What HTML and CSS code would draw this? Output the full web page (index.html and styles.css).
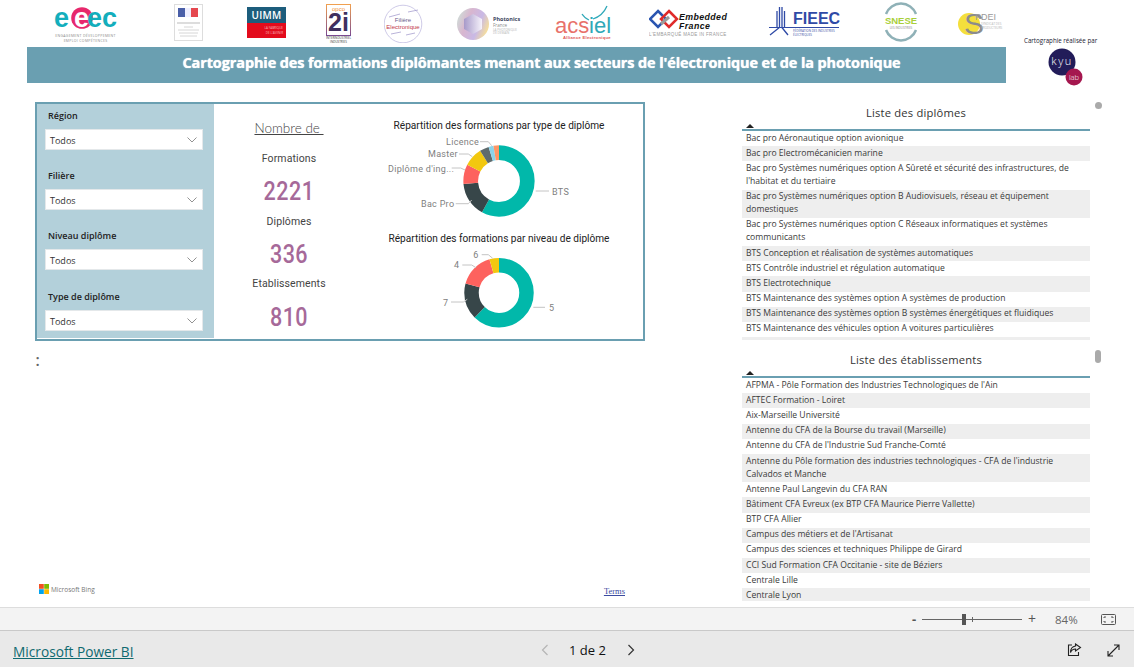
FILE: index.html
```html
<!DOCTYPE html>
<html lang="fr">
<head>
<meta charset="utf-8">
<title>Cartographie des formations</title>
<link rel="stylesheet" href="styles.css">
</head>
<body>
<main class="report">
  <header class="head">
    <div class="head-left">
      <div class="logos">
        <svg class="logo l-eeec" width="66" height="42" viewBox="0 0 66 42">
          <circle cx="28" cy="15" r="10.800" class="f-pink"/>
          <text x="0" y="24" class="t-eeec"><tspan class="f-teal">e</tspan><tspan dx="5" class="f-white">e</tspan><tspan dx="-2" class="f-teal">ec</tspan></text>
          <text x="31.500" y="34" class="t-tiny f-grey" text-anchor="middle">ENGAGEMENT DÉVELOPPEMENT</text>
          <text x="31.500" y="38.500" class="t-tiny f-grey" text-anchor="middle">EMPLOI COMPÉTENCES</text>
        </svg>
        <svg class="logo l-rf" width="30" height="38" viewBox="0 0 30 38">
          <rect x=".5" y=".5" width="28" height="36" class="box-grey"/>
          <rect x="4" y="4" width="7" height="9" fill="#4a5fa8"/>
          <rect x="11" y="4" width="6" height="9" fill="#eef"/>
          <rect x="17" y="4" width="7" height="9" fill="#e5484f"/>
          <path d="M3 19h23" class="line-grey"/>
          <path d="M10 23h9M4 26h21M5 29h19M6 32h17" class="line-light"/>
        </svg>
        <svg class="logo l-uimm" width="39" height="31" viewBox="0 0 39 31">
          <rect width="39" height="16" fill="#1d5d7c"/>
          <rect y="16" width="39" height="15" fill="#e30b1c"/>
          <text x="19.500" y="12" class="t-uimm f-white" text-anchor="middle">UIMM</text>
          <text x="36" y="21.500" class="t-mini f-pale" text-anchor="end">LA FABRIQUE</text>
          <text x="36" y="26.500" class="t-mini f-pale" text-anchor="end">DE L'AVENIR</text>
        </svg>
        <svg class="logo l-opco" width="26" height="42" viewBox="0 0 26 42">
          <defs>
            <linearGradient id="opco" x1="0" x2="0" y1="0" y2="1">
              <stop offset="0" stop-color="#f0a050"/>
              <stop offset="1" stop-color="#7a4a90"/>
            </linearGradient>
          </defs>
          <rect x=".5" y="1.500" width="24" height="31" fill="none" stroke="url(#opco)"/>
          <text class="t-opcoall"><tspan x="12.500" y="7.500" class="t-opco">opco</tspan><tspan x="12.500" y="28" class="t-2i">2i</tspan></text>
          <text x="12.500" y="36" class="t-mini f-dark" text-anchor="middle">INTERINDUSTRIEL</text>
          <text x="12.500" y="40" class="t-mini f-dark" text-anchor="middle">INDUSTRIES</text>
        </svg>
        <svg class="logo l-fil" width="40" height="42" viewBox="0 0 40 42">
          <circle cx="19" cy="23" r="18.800" class="ring-fil"/>
          <path d="M5 16l11-3M24 11l10-2M7 33l10-2M22 34l9-2" class="line-fil"/>
          <text x="19" y="21" class="t-fil f-plum" text-anchor="middle">Filière</text>
          <text x="19" y="28" class="t-fil f-red2" text-anchor="middle">Electronique</text>
        </svg>
        <svg class="logo l-pho" width="68" height="42" viewBox="0 0 68 42">
          <defs>
            <linearGradient id="pho" x1="0" x2="1" y1=".2" y2=".6">
              <stop offset="0" stop-color="#cfe0d8"/>
              <stop offset=".35" stop-color="#d8b6cf"/>
              <stop offset=".7" stop-color="#c9b9e6"/>
              <stop offset="1" stop-color="#f7df9a"/>
            </linearGradient>
            <linearGradient id="hex" x1="0" x2="1" y1="0" y2="0">
              <stop offset="0" stop-color="#a79ac9"/>
              <stop offset="1" stop-color="#f6f2fb"/>
            </linearGradient>
          </defs>
          <circle cx="16" cy="23" r="16" fill="url(#pho)"/>
          <path d="M16 13l9 5v10l-9 5-9-5V18z" fill="url(#hex)"/>
          <text x="36" y="20" class="t-pho">Photonics</text>
          <text x="36" y="25.500" class="t-mini2 f-grey">France</text>
          <text x="36" y="29.500" class="t-mini f-lgrey">LA PHOTONIQUE</text>
          <text x="36" y="33" class="t-mini f-lgrey">DE DEMAIN</text>
        </svg>
        <svg class="logo l-acs" width="60" height="42" viewBox="0 0 60 42">
          <path d="M54 3C51 10 46 14 40 16M29 11c2 3 4 5 7 6" class="line-acs"/>
          <text class="t-acsall"><tspan x="2" y="30" class="t-acs f-salmon">acs</tspan><tspan x="36" y="30" class="t-acs f-tealb">i</tspan><tspan x="41" y="30" class="t-acs f-tealb">el</tspan><tspan x="10" y="36" class="t-acs2 f-red3">Alliance Electronique</tspan></text>
        </svg>
        <svg class="logo l-emb" width="82" height="42" viewBox="0 0 82 42">
          <path d="M9 8l8 8-8 8-8-8z" class="emb-blue"/>
          <path d="M20 8l8 8-8 8-8-8z" class="emb-red"/>
          <path d="M12 21l8-7" class="emb-grey"/>
          <text x="30" y="16.500" class="t-emb">Embedded</text>
          <text x="30" y="25.500" class="t-emb">France</text>
          <text x="0" y="33" class="t-emb2">L'EMBARQUÉ MADE IN FRANCE</text>
        </svg>
        <svg class="logo l-fie" width="72" height="42" viewBox="0 0 72 42">
          <path d="M8 10v16M10.500 6v20M13 6v20M15.500 10v16M11 26L1 34M12.500 26L19 34" class="line-fie"/>
          <path d="M0 26.500h70" class="line-fie2"/>
          <text x="24" y="23" class="t-fie">FIEEC</text>
          <text x="24" y="31" class="t-mini f-blue">FÉDÉRATION DES INDUSTRIES</text>
          <text x="24" y="34.500" class="t-mini f-blue">ÉLECTRIQUES</text>
        </svg>
        <svg class="logo l-sne" width="38" height="42" viewBox="0 0 38 42">
          <path d="M4 13a16 16 0 0 1 30 0M4 29a16 16 0 0 0 30 0" class="ring-sne"/>
          <text x="19" y="22.500" class="t-sne" text-anchor="middle">SNESE</text>
          <text x="19" y="27.500" class="t-mini f-grey" text-anchor="middle">LES INDUSTRIES</text>
        </svg>
        <svg class="logo l-cpd" width="46" height="42" viewBox="0 0 46 42">
          <circle cx="11" cy="24" r="11" fill="#f4df3c"/>
          <text class="t-cpdall"><tspan x="6" y="34" class="t-cpd">S</tspan><tspan x="17" y="20" class="t-cpd2">PDEI</tspan></text>
          <text x="23" y="25" class="t-mini f-lgrey">SYNDICAT DES</text>
          <text x="23" y="29" class="t-mini f-lgrey">PRODUCTEURS</text>
        </svg>
      </div>
      <div class="banner"><h1>Cartographie des formations diplômantes menant aux secteurs de l'électronique et de la photonique</h1></div>
    </div>
    <aside class="credit">
      <p>Cartographie réalisée par</p>
      <svg width="36" height="46" viewBox="0 0 36 46">
        <circle cx="15" cy="15" r="13.500" fill="#221c59"/>
        <circle cx="27" cy="30" r="8.500" fill="#a5174f"/>
        <text x="15" y="18" class="t-kyu" text-anchor="middle">kyu</text>
        <text x="27" y="33" class="t-lab" text-anchor="middle">lab</text>
      </svg>
    </aside>
  </header>

  <section class="body">
    <div class="left">
      <div class="card">
        <div class="filters">
          <div class="slicer"><label>Région</label><div class="select"><span>Todos</span><svg width="10" height="6" viewBox="0 0 10 6"><path d="M.5.500L5 5 9.500.500" class="chev"/></svg></div></div>
          <div class="slicer"><label>Filière</label><div class="select"><span>Todos</span><svg width="10" height="6" viewBox="0 0 10 6"><path d="M.5.500L5 5 9.500.500" class="chev"/></svg></div></div>
          <div class="slicer"><label>Niveau diplôme</label><div class="select"><span>Todos</span><svg width="10" height="6" viewBox="0 0 10 6"><path d="M.5.500L5 5 9.500.500" class="chev"/></svg></div></div>
          <div class="slicer s-last"><label>Type de diplôme</label><div class="select"><span>Todos</span><svg width="10" height="6" viewBox="0 0 10 6"><path d="M.5.500L5 5 9.500.500" class="chev"/></svg></div></div>
        </div>
        <div class="stats">
          <div class="stat-head"><u>Nombre de&nbsp;</u></div>
          <div class="stat-label m1">Formations</div>
          <div class="stat-num m2">2221</div>
          <div class="stat-label m3">Diplômes</div>
          <div class="stat-num m2">336</div>
          <div class="stat-label m4">Etablissements</div>
          <div class="stat-num m5">810</div>
        </div>
        <div class="charts">
          <div class="chart-title t1">Répartition des formations par type de diplôme</div>
          <svg class="donut" width="270" height="96" viewBox="0 0 270 96">
            <g transform="rotate(-90 135 47)" class="ring">
              <circle cx="135" cy="47" r="28.300" pathLength="360" stroke-dasharray="208.500 360" stroke-dashoffset="0" class="c1"/>
              <circle cx="135" cy="47" r="28.300" pathLength="360" stroke-dasharray="56.500 360" stroke-dashoffset="-208.500" class="c2"/>
              <circle cx="135" cy="47" r="28.300" pathLength="360" stroke-dasharray="32 360" stroke-dashoffset="-265" class="c3"/>
              <circle cx="135" cy="47" r="28.300" pathLength="360" stroke-dasharray="31 360" stroke-dashoffset="-297" class="c4"/>
              <circle cx="135" cy="47" r="28.300" pathLength="360" stroke-dasharray="15 360" stroke-dashoffset="-328" class="c5"/>
              <circle cx="135" cy="47" r="28.300" pathLength="360" stroke-dasharray="8 360" stroke-dashoffset="-343" class="c6"/>
              <circle cx="135" cy="47" r="28.300" pathLength="360" stroke-dasharray="9 360" stroke-dashoffset="-351" class="c7"/>
            </g>
            <polyline points="171.700,57 185,57" class="lead"/>
            <polyline points="91.700,69.700 104.300,69.700 107.700,66" class="lead"/>
            <polyline points="87.700,34 96.700,34 101,36" class="lead"/>
            <polyline points="95,20 104.300,20 108.300,22.700" class="lead"/>
            <polyline points="116,7.700 124.300,7.700 127.700,11.700" class="lead"/>
            <text x="188" y="61" class="dl">BTS</text>
            <text x="57" y="73" class="dl">Bac Pro</text>
            <text x="24" y="37.500" class="dl">Diplôme d'ing...</text>
            <text x="64" y="23" class="dl">Master</text>
            <text x="82" y="11" class="dl">Licence</text>
          </svg>
          <div class="chart-title t2">Répartition des formations par niveau de diplôme</div>
          <svg class="donut" width="270" height="92" viewBox="0 0 270 92">
            <g transform="rotate(-90 135 45.700)" class="ring2">
              <circle cx="135" cy="45.700" r="27.500" pathLength="360" stroke-dasharray="224.600 360" stroke-dashoffset="0" class="c1"/>
              <circle cx="135" cy="45.700" r="27.500" pathLength="360" stroke-dasharray="61 360" stroke-dashoffset="-224.600" class="c2"/>
              <circle cx="135" cy="45.700" r="27.500" pathLength="360" stroke-dasharray="58.400 360" stroke-dashoffset="-285.600" class="c3"/>
              <circle cx="135" cy="45.700" r="27.500" pathLength="360" stroke-dasharray="16 360" stroke-dashoffset="-344" class="c4"/>
            </g>
            <polyline points="169.300,60.300 181,60.300" class="lead"/>
            <polyline points="87,55 99.300,55 103.300,52.300" class="lead"/>
            <polyline points="98.300,18 107.700,18 112,20.700" class="lead"/>
            <polyline points="117.700,7.700 124.300,7.700 128.700,11.300" class="lead"/>
            <text x="185" y="63.700" class="dl">5</text>
            <text x="79" y="59" class="dl">7</text>
            <text x="90" y="21.300" class="dl">4</text>
            <text x="109.300" y="11.300" class="dl">6</text>
          </svg>
        </div>
      </div>
      <div class="colon">:</div>
      <div class="map-foot">
        <div class="bing">
          <svg width="10" height="10" viewBox="0 0 10 10"><rect width="4.800" height="4.800" fill="#f25022"/><rect x="5.200" width="4.800" height="4.800" fill="#7fba00"/><rect y="5.200" width="4.800" height="4.800" fill="#00a4ef"/><rect x="5.200" y="5.200" width="4.800" height="4.800" fill="#ffb900"/></svg>
          <span>Microsoft Bing</span>
        </div>
        <a class="terms" href="#">Terms</a>
      </div>
    </div>

    <div class="lists">
      <div class="list l-a">
        <div class="list-title">Liste des diplômes</div>
        <div class="sort"><i class="tri"></i></div>
        <div class="row">Bac pro Aéronautique option avionique</div>
        <div class="row alt">Bac pro Electromécanicien marine</div>
        <div class="row">Bac pro Systèmes numériques option A Sûreté et sécurité des infrastructures, de<br>l'habitat et du tertiaire</div>
        <div class="row alt">Bac pro Systèmes numériques option B Audiovisuels, réseau et équipement<br>domestiques</div>
        <div class="row">Bac pro Systèmes numériques option C Réseaux informatiques et systèmes<br>communicants</div>
        <div class="row alt">BTS Conception et réalisation de systèmes automatiques</div>
        <div class="row">BTS Contrôle industriel et régulation automatique</div>
        <div class="row alt">BTS Electrotechnique</div>
        <div class="row">BTS Maintenance des systèmes option A systèmes de production</div>
        <div class="row alt">BTS Maintenance des systèmes option B systèmes énergétiques et fluidiques</div>
        <div class="row">BTS Maintenance des véhicules option A voitures particulières</div>
        <div class="row alt">BTS Maintenance des véhicules option B véhicules de transport routier</div>
      </div>
      <div class="list l-b">
        <div class="list-title">Liste des établissements</div>
        <div class="sort"><i class="tri"></i></div>
        <div class="row">AFPMA - Pôle Formation des Industries Technologiques de l'Ain</div>
        <div class="row alt">AFTEC Formation - Loiret</div>
        <div class="row">Aix-Marseille Université</div>
        <div class="row alt">Antenne du CFA de la Bourse du travail (Marseille)</div>
        <div class="row">Antenne du CFA de l'Industrie Sud Franche-Comté</div>
        <div class="row alt">Antenne du Pôle formation des industries technologiques - CFA de l'industrie<br>Calvados et Manche</div>
        <div class="row">Antenne Paul Langevin du CFA RAN</div>
        <div class="row alt">Bâtiment CFA Evreux (ex BTP CFA Maurice Pierre Vallette)</div>
        <div class="row">BTP CFA Allier</div>
        <div class="row alt">Campus des métiers et de l'Artisanat</div>
        <div class="row">Campus des sciences et techniques Philippe de Girard</div>
        <div class="row alt">CCI Sud Formation CFA Occitanie - site de Béziers</div>
        <div class="row">Centrale Lille</div>
        <div class="row alt">Centrale Lyon</div>
      </div>
    </div>
    <div class="scrolls">
      <i class="thumb t-a"></i>
      <i class="thumb t-b"></i>
    </div>
  </section>
</main>

<div class="zoombar">
  <span class="z-minus">-</span>
  <div class="track"><i class="tick"></i><i class="knob"></i></div>
  <span class="z-plus">+</span>
  <span class="z-pct">84%</span>
  <svg class="z-fit" width="15" height="11" viewBox="0 0 15 11"><rect x=".5" y=".5" width="14" height="10" rx="1" class="ico-thin"/><path d="M3 4V3h2M10 3h2v1M12 7v1h-2M5 8H3V7" class="ico-thin"/></svg>
</div>

<footer class="foot">
  <a class="pbi" href="#">Microsoft Power BI</a>
  <nav class="pager">
    <svg width="8" height="12" viewBox="0 0 8 12"><path d="M6.500 1L1.500 6l5 5" class="pg-off"/></svg>
    <span>1 de 2</span>
    <svg width="8" height="12" viewBox="0 0 8 12"><path d="M1.500 1l5 5-5 5" class="pg-on"/></svg>
  </nav>
  <div class="foot-icons">
    <svg width="15" height="14" viewBox="0 0 15 14"><path d="M5 2H1.500v10.500h10V9" class="ico"/><path d="M8.500 1l5 3.500-5 3.500V6C6 6 4.500 7 3.500 9.500 3.500 6 5.500 3.500 8.500 3z" class="ico"/></svg>
    <svg width="13" height="13" viewBox="0 0 13 13"><path d="M1 12L12 1M7 1h5v5M1 7v5h5" class="ico"/></svg>
  </div>
</footer>
</body>
</html>
```

FILE: styles.css
```css
* { box-sizing: border-box; }
html, body { margin: 0; padding: 0; }
body {
  width: 1134px;
  height: 667px;
  overflow: hidden;
  display: flex;
  flex-direction: column;
  background: #fff;
  font-family: "Open Sans", "Noto Sans", sans-serif;
  color: #333;
}
svg { display: block; }

.report { height: 607px; display: flex; flex-direction: column; overflow: hidden; }

/* header */
.head { display: flex; height: 83px; flex: none; }
.head-left { width: 1006px; flex: none; }
.logos { height: 47px; display: flex; align-items: flex-start; }
.logo { flex: none; }
.l-eeec { margin: 3px 0 0 54px; }
.l-rf { margin: 4px 0 0 54px; }
.l-uimm { margin: 7px 0 0 43px; }
.l-opco { margin: 3px 0 0 40px; }
.l-fil { margin: 1px 0 0 32px; }
.l-pho { margin: 1px 0 0 33px; }
.l-acs { margin: 3px 0 0 28px; }
.l-emb { margin: 3px 0 0 36px; }
.l-fie { margin: 1px 0 0 38px; }
.l-sne { margin: 1px 0 0 41px; }
.l-cpd { margin: 0 0 0 38px; }

.banner {
  margin-left: 27px;
  height: 36px;
  padding: 0 0 6px 50px;
  background: #6a9fb1;
  display: flex;
  align-items: center;
  justify-content: center;
}
.banner h1 {
  margin: 0;
  font-size: 14.500px;
  font-weight: 700;
  color: #fff;
  letter-spacing: -.12px;
  text-shadow: 0 0 1px #fff;
  white-space: nowrap;
}
.credit { flex: 1; padding: 36px 0 0 18px; }
.credit p { margin: 0 0 2px; font-size: 6.200px; line-height: 9px; color: #223; white-space: nowrap; }
.credit svg { margin-left: 23px; }

/* logo text */
.f-teal { fill: #13aebc; }
.f-tealb { fill: #2fa8b8; }
.f-pink { fill: #e7286c; }
.f-white { fill: #fff; }
.f-grey { fill: #8a8a8a; }
.f-lgrey { fill: #b5b5b5; }
.f-pale { fill: #f7b7bb; }
.f-dark { fill: #333; }
.f-plum { fill: #6b5b8a; }
.f-red2 { fill: #c23a4a; }
.f-red3 { fill: #e05550; }
.f-salmon { fill: #e8716a; }
.f-blue { fill: #3a50a5; }
.t-eeec { font: 700 27px "Liberation Sans", sans-serif; }
.t-tiny { font: 400 3.500px "Open Sans", sans-serif; letter-spacing: .3px; }
.t-mini { font: 400 3px "Open Sans", sans-serif; }
.t-mini2 { font: 400 4.500px "Open Sans", sans-serif; }
.t-uimm { font: 600 10px "Open Sans", sans-serif; letter-spacing: .3px; }
.t-opcoall, .t-acsall, .t-cpdall { font-family: "Liberation Sans", sans-serif; }
.t-opco { font-size: 6px; fill: #ef8f3a; text-anchor: middle; }
.t-2i { font-size: 25px; font-weight: 700; fill: #40305f; text-anchor: middle; }
.t-fil { font: 400 6px "Liberation Sans", sans-serif; }
.t-pho { font: 700 5.500px "Open Sans", sans-serif; fill: #3d4660; }
.t-acs { font-size: 22px; font-weight: 400; }
.t-acs2 { font-size: 4.200px; font-weight: 700; letter-spacing: .25px; }
.t-emb { font: italic 700 8.800px "Liberation Sans", sans-serif; fill: #111; letter-spacing: .4px; }
.t-emb2 { font: 400 4.500px "Liberation Sans", sans-serif; fill: #999; letter-spacing: .35px; }
.t-fie { font: 700 16px "Liberation Sans", sans-serif; fill: #2f4aa6; }
.t-sne { font: 700 9.500px "Liberation Sans", sans-serif; fill: #a9cf3a; }
.t-cpd { font-size: 30px; fill: #8c8c8c; }
.t-cpd2 { font-size: 9px; fill: #999; }
.t-kyu { font: 300 11px "Open Sans", sans-serif; fill: #fff; letter-spacing: 1.500px; }
.t-lab { font: 300 7.500px "Open Sans", sans-serif; fill: #fff; }
.box-grey { fill: #fff; stroke: #ddd; }
.line-grey { stroke: #bbb; fill: none; }
.line-light { stroke: #ccc; stroke-width: .8; fill: none; }
.ring-fil { fill: #fff; stroke: #b9b3dd; stroke-width: .7; }
.line-fil { stroke: #8a7fc0; stroke-width: .6; fill: none; }
.line-acs { stroke: #2fa8b8; stroke-width: 1.300; fill: none; }
.emb-red { fill: none; stroke: #e02b2b; stroke-width: 2.500; }
.emb-blue { fill: none; stroke: #2a55b0; stroke-width: 2.500; }
.emb-grey { fill: none; stroke: #9a9a9a; stroke-width: 3; }
.line-fie { stroke: #2f4aa6; stroke-width: 1.300; fill: none; }
.line-fie2 { stroke: #2f4aa6; stroke-width: 1; fill: none; }
.ring-sne { stroke: #8fb1b7; stroke-width: 2.500; fill: none; }

/* body */
.body { flex: 1; display: flex; padding-top: 19px; min-height: 0; }
.left {
  margin-left: 35px;
  width: 610px;
  flex: none;
  display: flex;
  flex-direction: column;
  padding-bottom: 9px;
}
.card {
  height: 239px;
  flex: none;
  border: 2px solid #6a9fb1;
  display: flex;
}
.filters {
  width: 177px;
  flex: none;
  height: 234px;
  background: #b3d0da;
  padding-left: 8px;
}
.slicer { width: 158px; margin-bottom: 18px; }
.slicer label {
  display: block;
  height: 16px;
  margin: 4px 0 5px;
  padding-left: 3px;
  font-size: 9px;
  line-height: 16px;
  font-weight: 600;
  color: #222;
}
.slicer + .slicer label { margin-top: 0; }
.s-last { margin-top: 19px; margin-bottom: 0; }
.select {
  height: 21px;
  background: #fff;
  border: 1px solid #e4e8ea;
  display: flex;
  align-items: center;
  justify-content: space-between;
  padding: 1px 5px 0 4px;
  font-size: 9px;
  color: #333;
}
.chev { fill: none; stroke: #777; stroke-width: .8; }

.stats { width: 150px; flex: none; text-align: center; color: #444; }
.stat-head { margin-top: 14px; line-height: 20px; font-size: 13.500px; font-weight: 300; font-family: "Lato", sans-serif; color: #444; }
.stat-label { line-height: 20px; font-size: 10.500px; font-family: "Roboto", sans-serif; letter-spacing: .1px; }
.stat-num {
  line-height: 34px;
  font-size: 25px;
  font-weight: 500;
  color: #a66999;
  font-family: "Roboto", sans-serif;
  letter-spacing: .6px;
  transform: scaleX(.86);
}
.m1 { margin-top: 11px; }
.m2 { margin-top: 6px; }
.m3 { margin-top: 3px; }
.m4 { margin-top: 2px; }
.m5 { margin-top: 7px; }

.charts { flex: 1; }
.chart-title { width: 270px; height: 16px; line-height: 16px; text-align: center; font-size: 10.100px; font-family: "Roboto", sans-serif; color: #222; white-space: nowrap; }
.t1 { margin-top: 14px; }
.t2 { margin-top: 1px; }
.ring circle { fill: none; stroke-width: 14.700; }
.ring2 circle { fill: none; stroke-width: 14.500; }
.c1 { stroke: #01b8aa; }
.c2 { stroke: #374649; }
.c3 { stroke: #fd625e; }
.c4 { stroke: #f2c80f; }
.c5 { stroke: #5f6b6d; }
.c6 { stroke: #8ad4eb; }
.c7 { stroke: #fe9666; }
.lead { fill: none; stroke: #c4c4c4; stroke-width: 1; }
.dl { font: 400 9px "Roboto", sans-serif; fill: #808080; letter-spacing: .3px; }

.colon { margin: 7px 0 0 0; font: 400 19px/24px "Liberation Serif", serif; color: #666; }
.map-foot {
  margin-top: auto;
  height: 14px;
  display: flex;
  align-items: center;
  justify-content: space-between;
  padding: 0 20px 0 4px;
}
.bing { display: flex; align-items: center; gap: 2px; margin-top: -4px; font-size: 6.500px; color: #777; }
.terms { font: 400 8.500px "Liberation Serif", serif; color: #3b4ba0; }

/* tables */
.lists { margin-left: 97px; width: 348px; flex: none; }
.list { overflow: hidden; }
.l-a { height: 238px; }
.l-b { height: 252px; margin-top: 9px; }
.list-title {
  height: 21px;
  line-height: 22px;
  text-align: center;
  font-size: 11.200px;
  color: #333;
  letter-spacing: .2px;
}
.sort {
  border-bottom: 2px solid #6a9fb1;
  padding-left: 4px;
  box-sizing: content-box;
  height: 5px;
}
.tri {
  display: block;
  width: 0;
  height: 0;
  margin-top: 1px;
  border-left: 4px solid transparent;
  border-right: 4px solid transparent;
  border-bottom: 4px solid #222;
}
.row {
  padding: .6px 4px 1.600px;
  font-size: 8.600px;
  line-height: 13px;
  color: #3a3a3a;
  white-space: nowrap;
}
.alt { background: #eee; }

.scrolls { margin-left: 5px; width: 6px; flex: none; display: flex; flex-direction: column; }
.thumb { display: block; background: #aaa; }
.t-a { width: 7px; height: 7px; border-radius: 50%; margin-top: 0; }
.t-b { width: 6px; height: 13px; border-radius: 3px; margin-top: 241px; }

/* zoom bar */
.zoombar {
  height: 23px;
  flex: none;
  background: #f3f3f3;
  border-top: 1px solid #ddd;
  display: flex;
  align-items: center;
  color: #555;
}
.z-minus { margin-left: 912px; width: 10px; font-size: 13px; font-weight: 700; line-height: 14px; }
.track { position: relative; width: 100px; height: 1px; background: #666; }
.tick { position: absolute; left: 50px; top: -2px; width: 1px; height: 5px; background: #666; }
.knob { position: absolute; left: 40px; top: -5px; width: 4px; height: 11px; background: #555; }
.z-plus { margin-left: 6px; font-size: 14px; line-height: 14px; width: 12px; }
.z-pct { margin-left: 15px; font-size: 11.500px; width: 24px; color: #666; }
.z-fit { margin-left: 22px; }
.ico-thin { fill: none; stroke: #555; stroke-width: 1; }

/* footer */
.foot {
  height: 37px;
  flex: none;
  background: #e9e9e9;
  border-top: 1px solid #c9c9c9;
  display: flex;
  align-items: center;
}
.pbi {
  margin: 4px 0 0 13px;
  width: 120px;
  font-size: 13.700px;
  color: #0f6a70;
  white-space: nowrap;
}
.pager { margin: 2px 0 0 408px; display: flex; align-items: center; gap: 20px; font-size: 13px; font-weight: 500; color: #111; }
.pager span { margin-right: 1px; }
.pg-off { fill: none; stroke: #b5b5b5; stroke-width: 1.200; }
.pg-on { fill: none; stroke: #333; stroke-width: 1.200; }
.foot-icons { margin: 2px 14px 0 auto; display: flex; gap: 25px; align-items: center; }
.ico { fill: none; stroke: #222; stroke-width: 1.100; }
```
